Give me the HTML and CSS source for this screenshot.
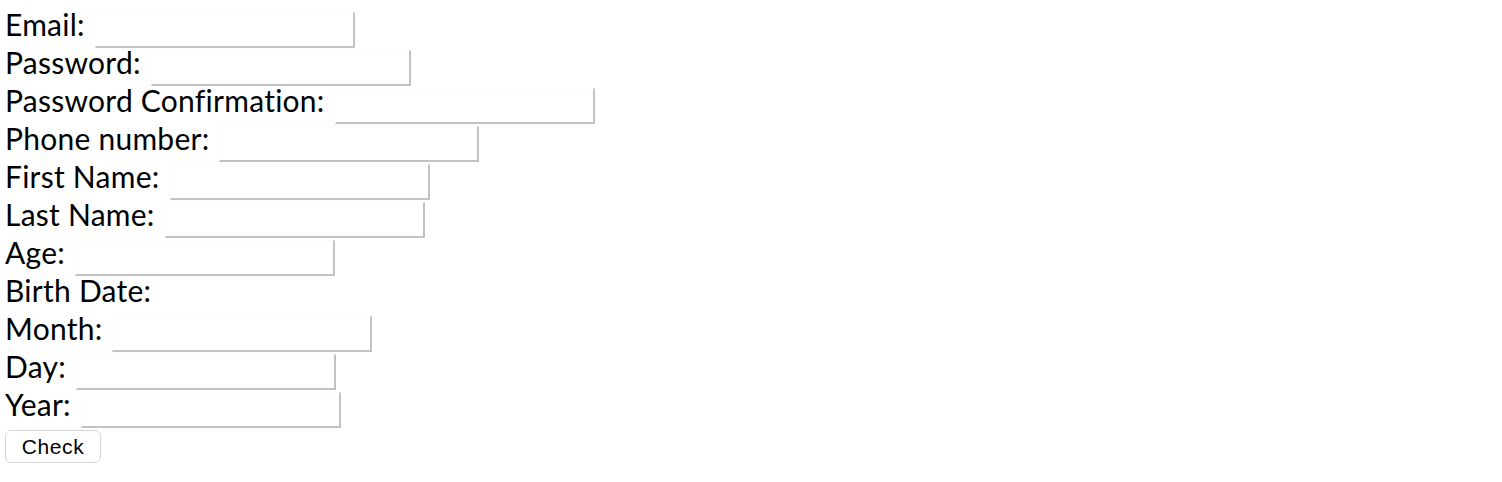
FILE: index.html
```html
<!DOCTYPE html>
<html>
<head>
<meta charset="utf-8">
<link rel="stylesheet" href="styles.css">
</head>
<body>
<form class="form">
  <div class="row"><label class="lbl">Email:</label><input class="field" type="text"></div>
  <div class="row"><label class="lbl">Password:</label><input class="field" type="password"></div>
  <div class="row"><label class="lbl">Password Confirmation:</label><input class="field" type="password"></div>
  <div class="row"><label class="lbl">Phone number:</label><input class="field" type="text"></div>
  <div class="row"><label class="lbl">First Name:</label><input class="field" type="text"></div>
  <div class="row"><label class="lbl">Last Name:</label><input class="field" type="text"></div>
  <div class="row"><label class="lbl">Age:</label><input class="field" type="text"></div>
  <div class="row"><label class="lbl">Birth Date:</label></div>
  <div class="row"><label class="lbl">Month:</label><input class="field" type="text"></div>
  <div class="row"><label class="lbl">Day:</label><input class="field" type="text"></div>
  <div class="row"><label class="lbl">Year:</label><input class="field" type="text"></div>
  <div class="row row-btn"><button class="btn" type="button">Check</button></div>
</form>
</body>
</html>
```
FILE: styles.css
```css
html, body {
  margin: 0;
  padding: 0;
  background: #ffffff;
}
.form {
  padding: 5px 0 0 5px;
  font-family: Lato, "Noto Sans", sans-serif;
  color: #000;
}
.row {
  display: flex;
  align-items: flex-start;
  gap: 10px;
  height: 38px;
}
.row-btn {
  height: 42px;
}
.lbl {
  font-size: 30px;
  line-height: 38px;
  letter-spacing: 0.25px;
  font-variant-ligatures: none;
  white-space: nowrap;
}
.field {
  margin: 7px 0 0 0;
  width: 260px;
  height: 36px;
  box-sizing: border-box;
  border-style: solid;
  border-width: 1px 2px 2px 1px;
  border-color: #fbfbfb #c2c2c2 #c2c2c2 #fbfbfb;
  background: #fff;
  padding: 0 4px;
  outline: none;
}
.btn {
  margin-top: 7px;
  width: 96px;
  height: 33px;
  box-sizing: border-box;
  border: 1px solid #d6d6d6;
  border-radius: 6px;
  background: #fff;
  font-family: "Liberation Sans", Arial, sans-serif;
  font-size: 21px;
  letter-spacing: 0.6px;
  color: #000;
  padding: 0;
}
```
